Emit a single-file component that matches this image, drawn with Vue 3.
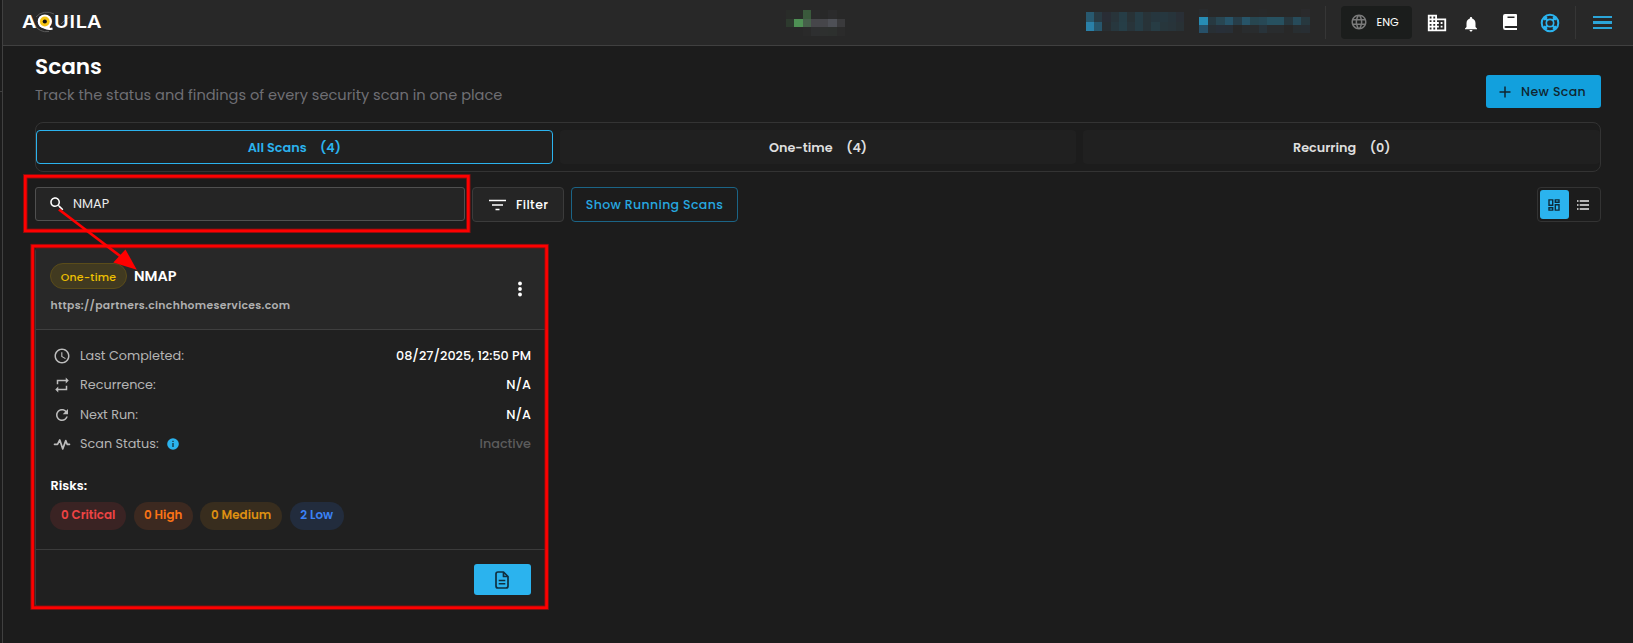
<script setup>
const mosaics = [
  {
    name: 'm-status',
    cells: ['#292c29', '#292c29', '#3a5a3c', '#2a2a2b', '#282828', '#2b2b2c', '#282828',
      '#2d3a2e', '#4e9154', '#46604a', '#46464a', '#46464a', '#4e5056', '#3a3a3c',
      '#282828', '#282828', '#2a2a2a', '#2e2f30', '#2e302f', '#2d302e', '#2b2b2b']
  },
  {
    name: 'm-org',
    cells: ['#28596f', '#283a43', '#292d35', '#28343a', '#263d46', '#283236', '#263c45', '#283338', '#26363e', '#26373f', '#27343b', '#292f36',
      '#2a80a8', '#27566c', '#282e32', '#27373e', '#263e47', '#28343a', '#263c45', '#283338', '#273c44', '#27363c', '#28343a', '#283135']
  },
  {
    name: 'm-user',
    cells: ['#292b2d', '#282828', '#282828', '#282828', '#282828', '#282828', '#282828', '#28292a', '#282828', '#282828', '#282828', '#282828', '#2a2a2c',
      '#278cb4', '#273941', '#284652', '#275469', '#273d48', '#275468', '#274650', '#274855', '#275160', '#275160', '#27373e', '#274b5a', '#27383f',
      '#275068', '#282f34', '#282f38', '#282f36', '#282828', '#292c2e', '#292c2e', '#28333a', '#292c2e', '#292c2e', '#282828', '#282e31', '#282e33']
  }
]
const tabs = [
  { label: 'All Scans', count: 4, active: true },
  { label: 'One-time', count: 4 },
  { label: 'Recurring', count: 0 }
]
const rows = [
  { icon: 'clock', label: 'Last Completed:', value: '08/27/2025, 12:50 PM' },
  { icon: 'repeat', label: 'Recurrence:', value: 'N/A' },
  { icon: 'refresh', label: 'Next Run:', value: 'N/A' },
  { icon: 'pulse', label: 'Scan Status:', value: 'Inactive', cls: 'off', info: true }
]
const icons = {
  clock: 'M11.99 2C6.47 2 2 6.48 2 12s4.47 10 9.99 10C17.52 22 22 17.52 22 12S17.52 2 11.99 2zM12 20c-4.42 0-8-3.58-8-8s3.58-8 8-8 8 3.58 8 8-3.58 8-8 8zm.5-13H11v6l5.25 3.15.75-1.23-4.5-2.67z',
  repeat: 'M7 7h10v3l4-4-4-4v3H5v6h2V7zm10 10H7v-3l-4 4 4 4v-3h12v-6h-2v4z',
  refresh: 'M17.65 6.35C16.2 4.9 14.21 4 12 4c-4.42 0-7.99 3.58-7.99 8s3.57 8 7.99 8c3.73 0 6.84-2.55 7.73-6h-2.08c-.82 2.33-3.04 4-5.65 4-3.31 0-6-2.69-6-6s2.69-6 6-6c1.66 0 3.14.69 4.22 1.78L13 11h7V4l-2.35 2.35z',
  pulse: 'M2 12.5h4L9 6.5l4 12 4-11 2 5h3'
}
const risks = [
  { text: '0 Critical', cls: 'critical' },
  { text: '0 High', cls: 'high' },
  { text: '0 Medium', cls: 'medium' },
  { text: '2 Low', cls: 'low' }
]
</script>

<template>
  <div class="app">
    <div class="rail"><span class="rail-mark"></span></div>
    <div class="main">
      <header class="topbar">
        <svg class="logo" width="84" height="24" viewBox="0 0 84 24">
          <path d="M15 7A13 11 0 0 1 33 4M14 15A12 10 0 0 0 28 21.500M40 14Q44 9 49 7" fill="none" stroke="#5a5a5a" stroke-width="1" />
          <text transform="scale(1.120 1)" x="1 14.500 29.500 43.200 49 59" y="17.800">AQUILA</text>
          <path d="M23 17.500Q27 20 31.500 18.500" fill="none" stroke="#fff" stroke-width="2" />
          <circle cx="23.800" cy="11.500" r="7" fill="#fff" />
          <circle cx="23.800" cy="11.500" r="4.900" fill="#f6c515" />
          <circle cx="23.800" cy="11.500" r="2.100" fill="#111" />
        </svg>
        <div v-for="m in mosaics" :key="m.name" class="mosaic" :class="m.name">
          <i v-for="(c, i) in m.cells" :key="i" :style="{ background: c }"></i>
        </div>
        <span class="sep sep-a"></span>
        <button class="lang">
          <svg width="18" height="18" viewBox="0 0 24 24" fill="#7a7a7a"><path d="M11.990 2C6.470 2 2 6.480 2 12s4.470 10 9.990 10C17.520 22 22 17.520 22 12S17.520 2 11.990 2zm6.930 6h-2.950c-.32-1.250-.78-2.450-1.380-3.560 1.840.63 3.370 1.910 4.330 3.560zM12 4.040c.83 1.200 1.480 2.530 1.910 3.960h-3.820c.43-1.430 1.080-2.760 1.910-3.960zM4.260 14C4.100 13.360 4 12.690 4 12s.1-1.360.26-2h3.380c-.08.66-.14 1.320-.14 2s.06 1.340.14 2H4.260zm.82 2h2.950c.32 1.250.78 2.450 1.380 3.560-1.840-.63-3.370-1.900-4.330-3.560zm2.950-8H5.080c.96-1.660 2.490-2.930 4.330-3.560C8.810 5.550 8.350 6.750 8.030 8zM12 19.960c-.83-1.200-1.480-2.530-1.910-3.960h3.820c-.43 1.430-1.080 2.760-1.910 3.960zM14.340 14H9.660c-.09-.66-.16-1.320-.16-2s.07-1.350.16-2h4.680c.09.65.16 1.320.16 2s-.07 1.340-.16 2zm.25 5.560c.6-1.110 1.060-2.310 1.380-3.560h2.950c-.96 1.650-2.490 2.930-4.330 3.560zM16.360 14c.08-.66.14-1.320.14-2s-.06-1.340-.14-2h3.380c.16.64.26 1.310.26 2s-.1 1.360-.26 2h-3.380z" /></svg>
          <span>ENG</span>
        </button>
        <svg class="building" width="22" height="22" viewBox="0 0 24 24" fill="#fff"><path fill-rule="evenodd" d="M12 7V3H2v18h20V7H12zM6 19H4v-2h2v2zm0-4H4v-2h2v2zm0-4H4V9h2v2zm0-4H4V5h2v2zm4 12H8v-2h2v2zm0-4H8v-2h2v2zm0-4H8V9h2v2zm0-4H8V5h2v2zm10 12h-8v-2h2v-2h-2v-2h2v-2h-2V9h8v10zm-2-8h-2v2h2v-2zm0 4h-2v2h2v-2z" /></svg>
        <svg class="bell" width="18" height="18" viewBox="0 0 24 24" fill="#fff"><path d="M12 22c1.100 0 2-.9 2-2h-4c0 1.100.89 2 2 2zm6-6v-5c0-3.070-1.640-5.640-4.500-6.320V4c0-.83-.67-1.500-1.500-1.500s-1.500.67-1.500 1.500v.68C7.630 5.360 6 7.920 6 11v5l-2 2v1h16v-1l-2-2z" /></svg>
        <svg class="book" width="14" height="16" viewBox="0 0 14 16"><path d="M2 0H13Q14 0 14 1V12H2.800Q1.500 12 1.500 13T2.800 14H14V16H2.200Q0 16 0 13.500V2Q0 0 2 0ZM4.500 2.500V4H11.500V2.500Z" fill="#fff" fill-rule="evenodd" /></svg>
        <svg class="buoy" width="20" height="20" viewBox="0 0 20 20" fill="none" stroke="#2bb3ee">
          <circle cx="10" cy="10" r="8.300" stroke-width="2" />
          <circle cx="10" cy="10" r="3.700" stroke-width="1.700" />
          <path d="M3.600 6.700 6.700 3.600M7.700 7.700 5 5M16.400 6.700 13.300 3.600M12.300 7.700 15 5M3.600 13.300 6.700 16.400M7.700 12.300 5 15M16.400 13.300 13.300 16.400M12.300 12.300 15 15" stroke-width="2.400" />
        </svg>
        <span class="sep sep-b"></span>
        <span class="burger"><i></i><i></i><i></i></span>
      </header>

      <main class="page">
        <div class="head">
          <div>
            <h1>Scans</h1>
            <p>Track the status and findings of every security scan in one place</p>
          </div>
          <button class="new">
            <svg width="12" height="12" viewBox="0 0 12 12"><path d="M6 .5V11.500M.5 6H11.500" stroke="#10252f" stroke-width="1.500" /></svg>
            <span>New Scan</span>
          </button>
        </div>

        <nav class="tabs">
          <button v-for="t in tabs" :key="t.label" class="tab" :class="{ active: t.active }">
            <span>{{ t.label }}</span><span>({{ t.count }})</span>
          </button>
        </nav>

        <div class="tools">
          <label class="search">
            <svg width="18" height="18" viewBox="0 0 24 24" fill="#fff"><path d="M15.500 14h-.79l-.28-.27C15.410 12.590 16 11.110 16 9.500 16 5.910 13.090 3 9.500 3S3 5.910 3 9.500 5.910 16 9.500 16c1.610 0 3.090-.59 4.230-1.570l.27.28v.79l5 4.990L20.490 19l-4.990-5zm-6 0C7.010 14 5 11.990 5 9.500S7.010 5 9.500 5 14 7.010 14 9.500 11.990 14 9.500 14z" /></svg>
            <span>NMAP</span>
          </label>
          <button class="filter">
            <svg width="17" height="12" viewBox="0 0 17 12"><path d="M0 1.500H17M3 6H14M6.500 10.500H10.500" stroke="#fff" stroke-width="1.700" /></svg>
            <span>Filter</span>
          </button>
          <button class="running">Show Running Scans</button>
          <div class="views">
            <span class="view on">
              <svg width="12" height="12" viewBox="0 0 12 12" fill="none" stroke="#0d2a38" stroke-width="1.400"><path d="M1 .9H4.700V6.200H1ZM7.300.9H11V3.300H7.300ZM7.300 5.800H11V11.100H7.300ZM1 8.700H4.700V11.100H1Z" /></svg>
            </span>
            <span class="view">
              <svg width="12" height="10" viewBox="0 0 12 10" stroke="#e8e8e8" stroke-width="1.400"><path d="M0 1H1.500M2.700 1H12M0 5H1.500M2.700 5H12M0 9H1.500M2.700 9H12" /></svg>
            </span>
          </div>
        </div>

        <article class="card">
          <div class="card-head">
            <div>
              <div class="title"><span class="badge">One-time</span><b>NMAP</b></div>
              <div class="url">https://partners.cinchhomeservices.com</div>
            </div>
            <svg width="4" height="16" viewBox="0 0 4 16" fill="#fff"><circle cx="2" cy="2.500" r="1.900" /><circle cx="2" cy="8" r="1.900" /><circle cx="2" cy="13.500" r="1.900" /></svg>
          </div>
          <div class="card-body">
            <div v-for="r in rows" :key="r.label" class="row">
              <svg class="row-icon" width="18" height="18" viewBox="0 0 24 24">
                <path v-if="r.icon === 'pulse'" :d="icons.pulse" fill="none" stroke="#bdbdbd" stroke-width="2.200" stroke-linejoin="round" stroke-linecap="round" />
                <path v-else :d="icons[r.icon]" fill="#bdbdbd" />
              </svg>
              <span class="row-label">{{ r.label }}</span>
              <svg v-if="r.info" class="info" width="12" height="12" viewBox="0 0 12 12"><circle cx="6" cy="6" r="5.800" fill="#2bb3ee" /><path d="M6 2.700V4M6 5V9" stroke="#14303d" stroke-width="1.300" /></svg>
              <span class="row-value" :class="r.cls">{{ r.value }}</span>
            </div>
            <div class="risks-title">Risks:</div>
            <div class="risks">
              <span v-for="k in risks" :key="k.text" class="chip" :class="k.cls">{{ k.text }}</span>
            </div>
          </div>
          <div class="card-foot">
            <button class="report">
              <svg width="14" height="18" viewBox="0 0 14 18" fill="none" stroke="#10303f" stroke-width="1.700"><path d="M8.500 1H3Q1 1 1 3V15Q1 17 3 17H11Q13 17 13 15V5.500ZM8.500 1V5.500H13" stroke-linejoin="round" /><path d="M3.700 9.500H10.300M3.700 12.800H10.300" stroke-width="1.400" /></svg>
            </button>
          </div>
        </article>
      </main>
    </div>

    <!-- Callouts linking the search field to its result -->
    <svg class="callouts" width="1633" height="643" viewBox="0 0 1633 643" fill="none">
      <g stroke="#8a0f0f" stroke-width="4.400">
        <rect x="25.300" y="176.300" width="443" height="54.500" />
        <rect x="32.600" y="246.100" width="514" height="361.600" />
      </g>
      <g stroke="#ff0000" stroke-width="2.600">
        <rect x="25.300" y="176.300" width="443" height="54.500" />
        <rect x="32.600" y="246.100" width="514" height="361.600" />
      </g>
      <path d="M59 209.500 124 259" stroke="#ff0000" stroke-width="2.700" />
      <path d="M136.800 269.800 113.300 262.500 125.500 249.500Z" fill="#ff0000" />
    </svg>
  </div>
</template>

<style>
body { background: #1c1c1c; }
</style>

<style scoped>
* { box-sizing: border-box; }
.app { position: relative; display: flex; width: 1633px; height: 643px; overflow: hidden; background: #1c1c1c; color: #fff; font-family: Poppins, Inter, "Liberation Sans", sans-serif; }
button { margin: 0; padding: 0; border: 0; font-family: inherit; color: inherit; background: none; white-space: nowrap; }
svg { display: block; flex: none; }
.rail { flex: none; width: 3px; border-right: 1px solid #404040; padding-top: 91px; }
.rail-mark { display: block; height: 1px; background: #404040; }
.main { flex: 1; min-width: 0; }

.topbar { display: flex; align-items: flex-start; height: 46px; background: #282828; border-bottom: 1px solid #404040; }
.logo { margin: 10px 0 0 18px; font-family: Inter, sans-serif; font-size: 17.800px; font-weight: 600; fill: #fff; }
.mosaic { display: grid; flex: none; }
.m-status { grid-template-columns: repeat(7, 1fr); width: 59px; height: 26px; margin: 10px 0 0 681px; }
.m-org { grid-template-columns: repeat(12, 1fr); width: 98px; height: 19px; margin: 12px 0 0 241px; }
.m-user { grid-template-columns: repeat(13, 1fr); width: 111px; height: 24px; margin: 9px 0 0 15px; }
.sep { flex: none; width: 1px; height: 33px; margin-top: 6px; background: #363636; }
.sep-a { margin-left: 15px; }
.lang { display: flex; align-items: center; flex: none; width: 71px; height: 33px; margin: 6px 0 0 15px; padding: 0 0 2px 9px; border-radius: 4px; background: #1b1d1c; font-size: 11.200px; gap: 8.500px; }
.lang span { padding-top: 2px; }
.building { margin: 12px 0 0 14px; }
.bell { margin: 15px 0 0 14px; }
.book { margin: 14px 0 0 23px; }
.buoy { margin: 13px 0 0 23px; }
.sep-b { margin-left: 15px; }
.burger { display: flex; flex-direction: column; gap: 3px; margin: 16px 0 0 17px; }
.burger i { width: 19px; height: 2.400px; background: #2ba5d9; }

.page { padding: 0 32px; }
.head { display: flex; justify-content: space-between; height: 76px; }
h1 { margin: 9px 0 0; font-size: 21.600px; line-height: 24px; font-weight: 600; }
p { margin: 6px 0 0; font-size: 14.600px; line-height: 20px; color: #6f6f74; }
.new { display: flex; align-items: center; gap: 10px; width: 115px; height: 33px; margin-top: 29px; padding-left: 13px; border-radius: 3px; background: #12a0dd; color: #10252f; font-size: 12.500px; font-weight: 500; letter-spacing: .4px; }

.tabs { display: flex; align-items: center; gap: 7px; height: 50px; border: 1px solid #333; border-radius: 8px; }
.tab { display: flex; flex: 1; align-items: center; justify-content: center; gap: 13.500px; height: 34px; padding-top: 1px; border: 1px solid transparent; border-radius: 4px; background: #202020; color: #dedede; font-size: 12.800px; font-weight: 600; }
.tab.active { border-color: #2bb3ee; color: #2bb3ee; }

.tools { display: flex; align-items: flex-start; height: 61px; padding-top: 15px; }
.search { display: flex; align-items: center; gap: 7px; width: 430px; height: 34px; padding-left: 12px; padding-bottom: 1px; border: 1px solid #505050; border-radius: 3px; background: #252525; font-size: 12.800px; color: #ececec; }
.filter { display: flex; align-items: center; gap: 10px; width: 92px; height: 35px; margin-left: 7px; padding-left: 16px; border: 1px solid #3b3b3b; border-radius: 4px; background: #252525; font-size: 12.500px; font-weight: 500; letter-spacing: .36px; }
.running { width: 167px; height: 35px; margin-left: 7px; border: 1px solid #1b6486; border-radius: 4px; color: #27a8e0; font-size: 12.500px; font-weight: 500; letter-spacing: .36px; }
.views { display: flex; width: 64px; height: 35px; margin-left: auto; padding: 2px; border: 1px solid #333; border-radius: 4px; }
.view { display: flex; align-items: center; justify-content: center; width: 29px; height: 29px; padding-right: 2px; border-radius: 3px; }
.view.on { background: #2bb3ee; }

.card { width: 512px; height: 361px; margin-top: 14px; border: 1px solid #3b3b3b; border-radius: 4px; background: #202020; }
.card-head { display: flex; justify-content: space-between; height: 82px; padding: 15px 24.500px 0 14px; border-bottom: 1px solid #3f3f3f; background: #282828; }
.card-head > svg { margin-top: 18px; }
.title { display: flex; align-items: center; gap: 7px; height: 26px; font-size: 14.400px; }
.title b { font-weight: 600; }
.badge { display: flex; align-items: center; justify-content: center; width: 77px; height: 26px; padding-top: 3px; border: 1px solid #5a4c1a; border-radius: 13px; background: #413a20; color: #efc000; font-size: 10.900px; font-weight: 500; letter-spacing: .22px; }
.url { margin: 9px 0 0 .5px; font-size: 10.800px; line-height: 16px; font-weight: 600; letter-spacing: .33px; color: #b0b0b0; }
.card-body { height: 219px; padding: 11px 15px 0 17px; }
.row { display: flex; align-items: center; height: 29.500px; font-size: 12.800px; }
.row-icon { margin-right: 9px; }
.row-label { color: #b4b4b4; }
.info { margin-left: 8px; }
.row-value { margin-left: auto; font-weight: 500; }
.off { color: #5c5c5c; }
.risks-title { margin: 18.600px 0 0 -2.500px; font-size: 12.800px; line-height: 16px; font-weight: 600; }
.risks { display: flex; gap: 7.500px; margin: 8px 0 0 -2.800px; }
.chip { display: flex; align-items: center; justify-content: center; height: 28px; border-radius: 14px; font-size: 11.900px; font-weight: 600; }
.critical { width: 76px; background: #3a2323; color: #ef4444; }
.high { width: 59px; background: #3c2920; color: #f97316; }
.medium { width: 82px; background: #382d1e; color: #dd9012; }
.low { width: 54px; background: #222c3d; color: #3b82f6; }
.card-foot { display: flex; justify-content: flex-end; padding: 14px 15px 0; border-top: 1px solid #3b3b3b; }
.report { display: flex; align-items: center; justify-content: center; width: 57px; height: 31px; padding-right: 1px; border-radius: 3px; background: #2bb3ee; }
.callouts { position: absolute; inset: 0; pointer-events: none; }
</style>
